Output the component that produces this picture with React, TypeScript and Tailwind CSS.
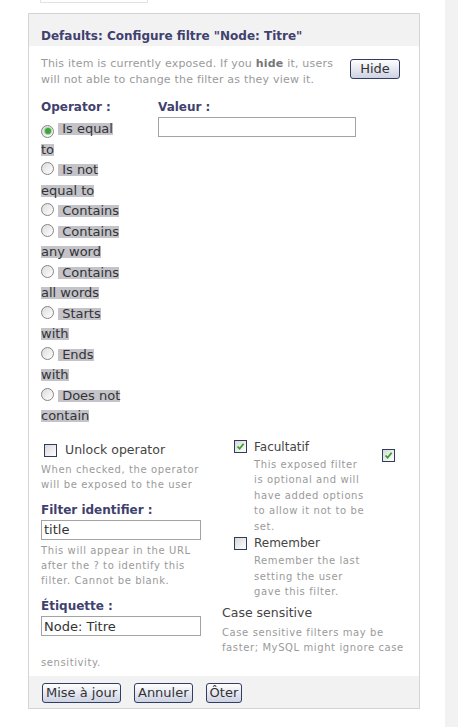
const ops: [string, boolean][] = [
  ['Is equal to', true],
  ['Is not equal to', false],
  ['Contains', false],
  ['Contains any word', false],
  ['Contains all words', false],
  ['Starts with', false],
  ['Ends with', false],
  ['Does not contain', false],
];

function Radio({ on }: { on?: boolean }) {
  return (
    <span className="inline-flex items-center justify-center w-[13px] h-[13px] mr-[4px] align-[-1px] rounded-full border border-[#858585] bg-gradient-to-br from-[#dcdcdc] to-white">
      {on && <span className="w-[6px] h-[6px] rounded-full bg-[#3fa33f] shadow-[0_0_0_1px_#a6d8a6]" />}
    </span>
  );
}

function Check({ on }: { on?: boolean }) {
  return (
    <span className="inline-flex items-center justify-center w-[13px] h-[13px] shrink-0 border border-[#2e3d5e] bg-gradient-to-br from-[#d8d8d8] to-white">
      {on && (
        <svg width="9" height="9" viewBox="0 0 9 9">
          <path d="M1.5 4.5 L3.6 6.7 L7.6 1.8" fill="none" stroke="#34a02c" strokeWidth="1.8" />
        </svg>
      )}
    </span>
  );
}

function Btn({ children }: { children: React.ReactNode }) {
  return (
    <button className="h-[20px] px-[3px] text-[13px] leading-[16px] text-[#333] rounded-[3px] border border-[#2f3e62] bg-gradient-to-b from-white to-[#cdd2e2]">
      {children}
    </button>
  );
}

const desc = 'text-[10px] tracking-[0.6px] text-[#9a9a9a]';
const lbl = 'text-[12px] font-bold leading-[14px] text-[#3f416e]';

export default function App() {
  return (
    <div className="flex min-h-screen bg-white font-['DejaVu_Sans',Verdana,sans-serif]">
      <div className="w-[445px]">
        {/* top tab remnant */}
        <div className="ml-[40px] w-[108px] h-[3px] border-x border-b border-[#e2e2e2]" />

        {/* ═══ PANEL ═══ */}
        <div className="mt-[10px] ml-[28px] w-[392px] border border-[#d4d4d4]">
          <div className="h-[32px] bg-[#f2f2f2] px-[12px] pt-[15px]">
            <h2 className="text-[12px] font-bold leading-[14px] text-[#3f416e]">Defaults: Configure filtre "Node: Titre"</h2>
          </div>

          <div className="px-[12px] pt-[10px] pb-[6px]">
            <div className="flex">
              <p className="w-[300px] text-[11px] tracking-[0.2px] leading-[16px] text-[#9a9a9a]">
                This item is currently exposed. If you <b className="text-[#777]">hide</b> it, users will not able to change the filter as they view it.
              </p>
              <div className="ml-[9px]">
                <button className="h-[20px] w-[50px] text-[13px] leading-[16px] text-[#333] rounded-[3px] border border-[#2f3e62] bg-gradient-to-b from-white to-[#cdd2e2]">Hide</button>
              </div>
            </div>

            {/* operator + value */}
            <div className="flex mt-[12px]">
              <div className="w-[117px]">
                <p className={lbl}>Operator :</p>
                <div className="mt-[5px] w-[80px] text-[13px] leading-[20.5px] text-[#333]">
                  {ops.map(([t, on]) => (
                    <div key={t}>
                      <Radio on={on} />
                      <span className="bg-[linear-gradient(transparent_2px,#c3c3c9_2px,#c3c3c9_14px,transparent_14px)]">{'\u00a0'}{t}</span>
                    </div>
                  ))}
                </div>
              </div>
              <div>
                <p className={lbl}>Valeur :</p>
                <input className="mt-[3px] w-[198px] h-[20px] border border-[#a3a3a3] outline-none" />
              </div>
            </div>

            {/* options */}
            <div>
              <div className="float-left w-[181px] mt-[16px] mb-[8px]">
                <div className="flex items-center h-[16px] pl-[3px]">
                  <Check />
                  <span className="ml-[8px] text-[12.5px] text-[#444]">Unlock operator</span>
                </div>
                <p className={`${desc} leading-[15px] mt-[3px] w-[165px]`}>When checked, the operator will be exposed to the user</p>

                <p className={`${lbl} mt-[11px]`}>Filter identifier :</p>
                <input defaultValue="title" className="mt-[3px] w-[160px] h-[20px] px-[2px] text-[13px] text-[#333] border border-[#a3a3a3] outline-none" />
                <p className={`${desc} leading-[15px] mt-[2px] w-[165px]`}>This will appear in the URL after the ? to identify this filter. Cannot be blank.</p>

                <p className={`${lbl} mt-[11px]`}>Étiquette :</p>
                <input defaultValue="Node: Titre" className="mt-[3px] w-[160px] h-[20px] px-[2px] text-[13px] text-[#333] border border-[#a3a3a3] outline-none" />
              </div>

              <div className="flex pt-[12px]">
                <div className="w-[160px] pl-[12px]">
                  <div className="flex items-center h-[16px]">
                    <Check on />
                    <span className="ml-[7px] text-[12px] text-[#444]">Facultatif</span>
                  </div>
                  <p className={`${desc} leading-[15.5px] mt-[2px] ml-[20px] w-[114px]`}>This exposed filter is optional and will have added options to allow it not to be set.</p>
                  <div className="flex items-center h-[16px] mt-[1px]">
                    <Check />
                    <span className="ml-[7px] text-[12px] text-[#444]">Remember</span>
                  </div>
                  <p className={`${desc} leading-[15.5px] mt-[2px] ml-[20px] w-[114px]`}>Remember the last setting the user gave this filter.</p>
                </div>
                <div className="pt-[4px]">
                  <Check on />
                </div>
              </div>

              <p className="mt-[6px] text-[12.5px] leading-[14px] text-[#444]">Case sensitive</p>
              <p className={`${desc} leading-[15px] mt-[5px]`}>Case sensitive filters may be faster; MySQL might ignore case sensitivity.</p>
              <div className="clear-both" />
            </div>
          </div>

          {/* footer */}
          <div className="h-[32px] bg-[#f2f2f2] pl-[13px] pt-[7px] flex gap-[13px]">
            <Btn>Mise à jour</Btn>
            <Btn>Annuler</Btn>
            <Btn>Ôter</Btn>
          </div>
        </div>
      </div>
      <div className="flex-1 bg-[#f2f2f2]" />
    </div>
  );
}
